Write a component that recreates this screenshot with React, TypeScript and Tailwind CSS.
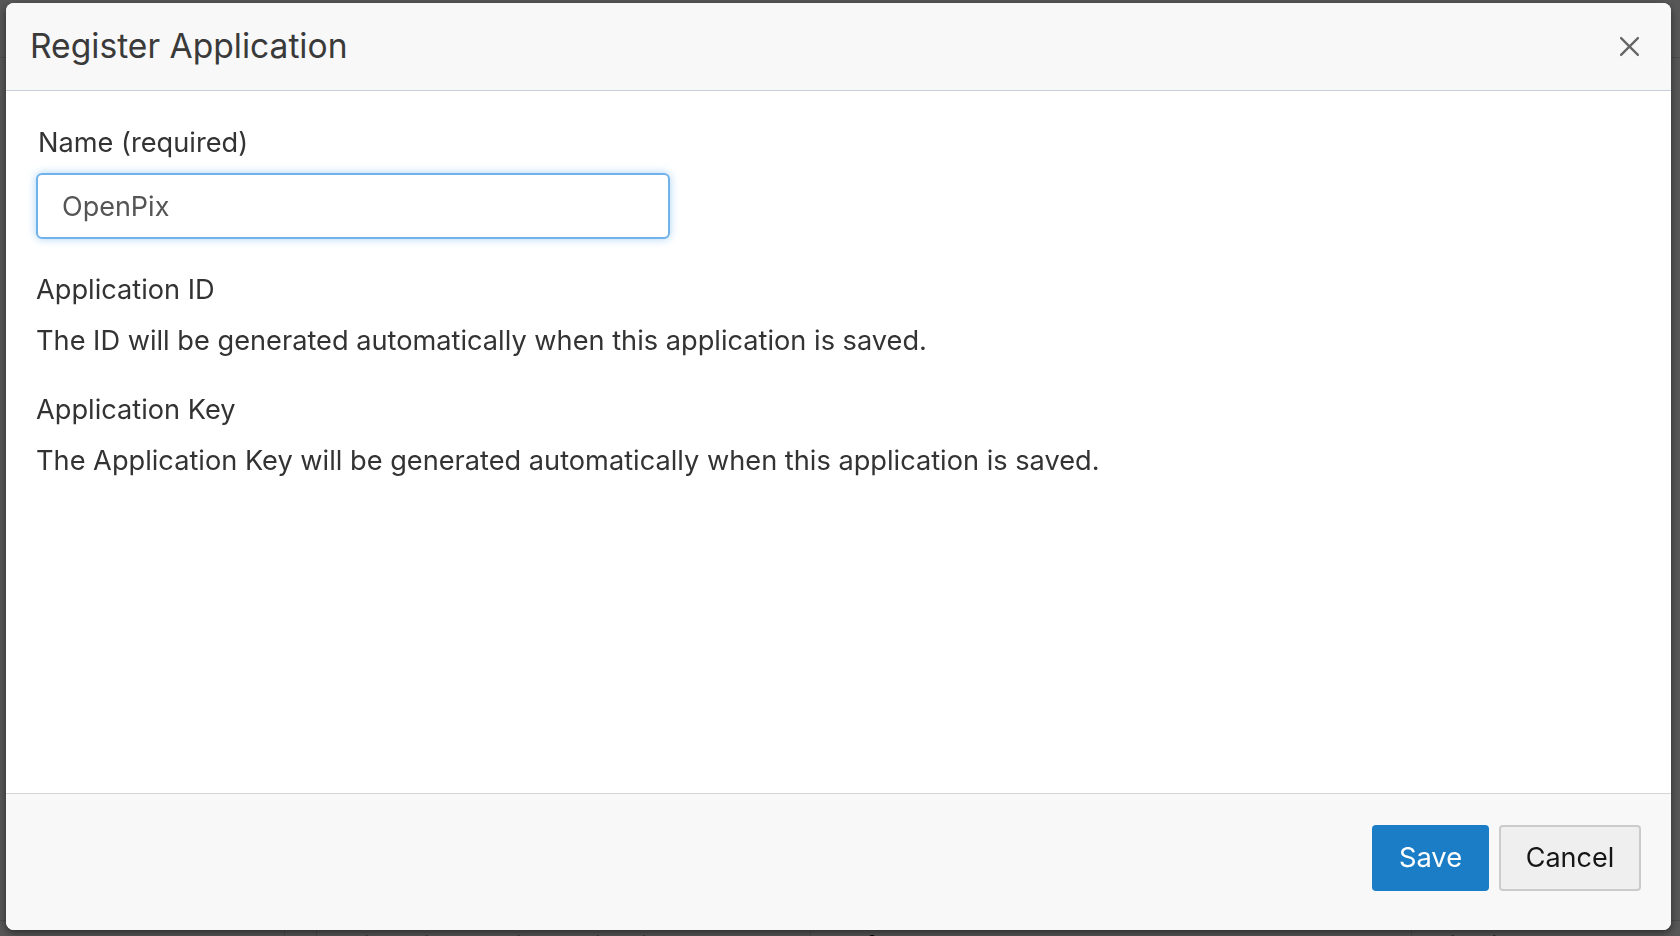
import React, { useState } from "react"

const font = { fontFamily: "Inter, 'Liberation Sans', Arial, sans-serif" }

function BackgroundPage() {
  // the page behind the dialog, mostly hidden by it
  return (
    <div className="h-screen w-full overflow-hidden bg-white">
      <div className="h-[58px] border-b border-[#dddddd]" />
      <div className="pt-[862px]">
        <div className="flex h-[60px] border-t border-[#dddddd] text-[27px] text-[#161616]">
          <div className="w-[285px] border-r border-[#dddddd]" />
          <div className="w-[32px] border-r border-[#dddddd]" />
          <div className="w-[494px] border-r border-[#dddddd] pl-[20px] pt-[6px] text-[#0a5a96]">Wish List Email Application</div>
          <div className="w-[601px] border-r border-[#dddddd] pl-[22px] pt-[6px]">7bfbeb02-4bb1-4b79-9b77-</div>
          <div className="flex-1 pl-[16px] pt-[6px]">6/27/21</div>
        </div>
      </div>
    </div>
  )
}

export default function App() {
  const [name, setName] = useState("OpenPix")

  return (
    <div className="relative h-screen w-full overflow-hidden" style={font}>
      <BackgroundPage />
      <div className="fixed inset-0 bg-black/[0.66]" />

      <div className="fixed left-[6px] top-[3px] flex h-[927px] w-[1665px] flex-col overflow-hidden rounded-[8px] bg-white shadow-[0_3px_9px_rgba(0,0,0,0.5)]">
        <div className="flex h-[88px] shrink-0 items-center justify-between border-b border-[#c6cfd9] bg-[#f8f8f8] pl-[24px] pr-[31px]">
          <h1 className="text-[33.6px] font-normal text-[#3a3a3a]">Register Application</h1>
          <button type="button" className="text-[#666666]">
            <svg width="21" height="21" viewBox="0 0 20 20" fill="none" stroke="currentColor" strokeWidth="2.2" strokeLinecap="round">
              <path d="M2 2 L18 18 M18 2 L2 18" />
            </svg>
          </button>
        </div>

        <div className="flex-1 bg-white px-[30px] pt-[34px] text-[27.2px] leading-[36px] text-[#333333]">
          <label className="block pl-[2px]">Name (required)</label>
          <input
            value={name}
            onChange={(e) => setName(e.target.value)}
            className="mt-[12px] block h-[66px] w-[634px] rounded-[6px] border-2 border-[#70b3ea] bg-white px-[24px] text-[27px] text-[#555555] shadow-[0_0_8px_rgba(102,175,233,0.55)] outline-none"
          />

          <div className="mt-[33px]">Application ID</div>
          <div className="mt-[15px]">The ID will be generated automatically when this application is saved.</div>

          <div className="mt-[33px]">Application Key</div>
          <div className="mt-[15px]">The Application Key will be generated automatically when this application is saved.</div>
        </div>

        <div className="flex h-[137px] shrink-0 items-start justify-end gap-[10px] border-t border-[#d6d6d6] bg-[#f8f8f8] pr-[30px] pt-[31px]">
          <button type="button" className="h-[66px] w-[117px] rounded-[4px] bg-[#1a7dc5] text-[27.3px] text-white">
            Save
          </button>
          <button type="button" className="h-[66px] w-[142px] rounded-[4px] border-2 border-[#cbcbcb] bg-[#efefef] text-[27px] text-[#161616]">
            Cancel
          </button>
        </div>
      </div>
    </div>
  )
}
